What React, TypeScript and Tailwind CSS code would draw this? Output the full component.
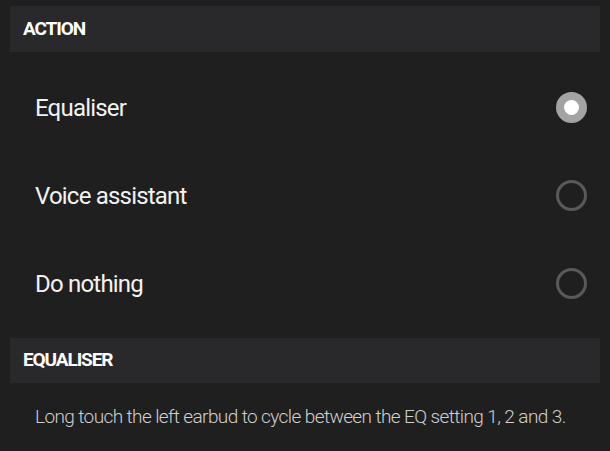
import React from "react";

const font = { fontFamily: "Roboto, 'Noto Sans', sans-serif" };

function Radio({ checked }: { checked: boolean }) {
  return checked ? (
    <div className="flex h-[31px] w-[31px] items-center justify-center rounded-full bg-[#a3a3a3]">
      <div className="h-[15px] w-[15px] rounded-full bg-white" />
    </div>
  ) : (
    <div className="h-[31px] w-[31px] rounded-full border-[3px] border-[#5a5a5a]" />
  );
}

export default function App() {
  const items = [
    { label: "Equaliser", checked: true },
    { label: "Voice assistant", checked: false },
    { label: "Do nothing", checked: false },
  ];
  return (
    <div className="h-[451px] w-[610px] bg-[#1f1f1f] pt-[6px]" style={font}>
      <div className="mx-[10px] flex h-[46px] items-center bg-[#29292c] px-[13px]">
        <span className="text-[19px] font-bold tracking-[-1.1px] text-white">ACTION</span>
      </div>
      <div className="flex flex-col py-[11px]">
        {items.map((it) => (
          <div key={it.label} className="flex h-[88px] items-center justify-between pl-[35px] pr-[23px]">
            <span className="mt-[2px] text-[24px] tracking-[-0.8px] text-[#f2f2f2]">{it.label}</span>
            <Radio checked={it.checked} />
          </div>
        ))}
      </div>
      <div className="mx-[10px] flex h-[45px] items-center bg-[#29292c] px-[13px]">
        <span className="text-[19px] font-bold tracking-[-1.1px] text-white">EQUALISER</span>
      </div>
      <div className="pl-[35px] pt-[20px]">
        <span className="text-[19px] font-light tracking-[-0.6px] text-[#cfcfcf]">
          Long touch the left earbud to cycle between the EQ setting 1, 2 and 3.
        </span>
      </div>
    </div>
  );
}
